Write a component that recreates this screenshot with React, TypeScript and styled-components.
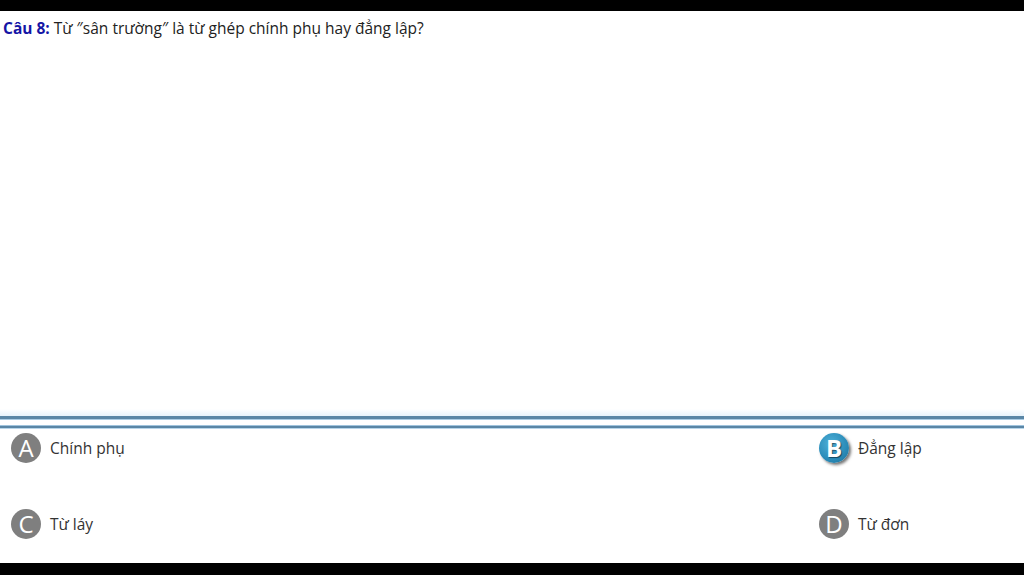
import React from "react";
import styled, { createGlobalStyle } from "styled-components";

const Global = createGlobalStyle`
  html, body { margin: 0; padding: 0; background: #000; }
  body { font-family: "Open Sans", "Noto Sans", sans-serif; }
`;

const Screen = styled.div`
  width: 1024px;
  height: 575px;
  background: #000;
  padding: 11px 0 12px;
  box-sizing: border-box;
  display: flex;
  flex-direction: column;
`;

const Sheet = styled.div`
  flex: 1;
  background: #fff;
  display: flex;
  flex-direction: column;
`;

const QuestionBox = styled.div`
  height: 408px;
  box-sizing: border-box;
  padding: 6px 3px 0;
  background: linear-gradient(to bottom, #fff 0, #fff 398px, #e6f2fb 405px);
  border-bottom: 3px solid #5a86a6;
  box-shadow: 0 1px 0 #a9cbe3;
`;

const Question = styled.p`
  margin: 0;
  font-size: 15.5px;
  line-height: 22px;
  color: #222;
`;

const Label = styled.span`
  font-weight: 700;
  color: #1515a5;
`;

const Divider = styled.div`
  margin-top: 6px;
  height: 2px;
  background: #5a86a6;
  border-top: 1px solid #9fc3dd;
  border-bottom: 1px solid #b9d6ea;
`;

const Options = styled.div`
  display: grid;
  grid-template-columns: 808px 1fr;
  row-gap: 46px;
  padding: 4px 0 0 11px;
`;

const Option = styled.div`
  display: flex;
  align-items: center;
  gap: 9px;
  height: 30px;
`;

const Badge = styled.div<{ $active?: boolean }>`
  width: 30px;
  height: 30px;
  border-radius: 50%;
  display: flex;
  align-items: center;
  justify-content: center;
  color: #fff;
  font-size: 24px;
  font-weight: ${(p) => (p.$active ? 700 : 400)};
  background: ${(p) =>
    p.$active
      ? "radial-gradient(circle at 40% 35%, #4eb0d8 0%, #2a8bb8 60%, #1b6c93 100%)"
      : "#7f7f7f"};
  box-shadow: ${(p) => (p.$active ? "2px 2px 3px rgba(0,0,0,0.55)" : "none")};
  text-shadow: ${(p) => (p.$active ? "1px 1px 1px rgba(0,0,0,0.5)" : "none")};
  line-height: 1;
`;

const OptionText = styled.span`
  font-size: 15.5px;
  color: #333;
`;

const options = [
  { key: "A", text: "Chính phụ" },
  { key: "B", text: "Đẳng lập", active: true },
  { key: "C", text: "Từ láy" },
  { key: "D", text: "Từ đơn" },
];

export default function App() {
  return (
    <>
      <Global />
      <Screen>
        <Sheet>
          <QuestionBox>
            <Question>
              <Label>Câu 8:</Label> Từ ″sân trường″ là từ ghép chính phụ hay đẳng lập?
            </Question>
          </QuestionBox>
          <Divider />
          <Options>
            {options.map((o) => (
              <Option key={o.key}>
                <Badge $active={o.active}>{o.key}</Badge>
                <OptionText>{o.text}</OptionText>
              </Option>
            ))}
          </Options>
        </Sheet>
      </Screen>
    </>
  );
}
